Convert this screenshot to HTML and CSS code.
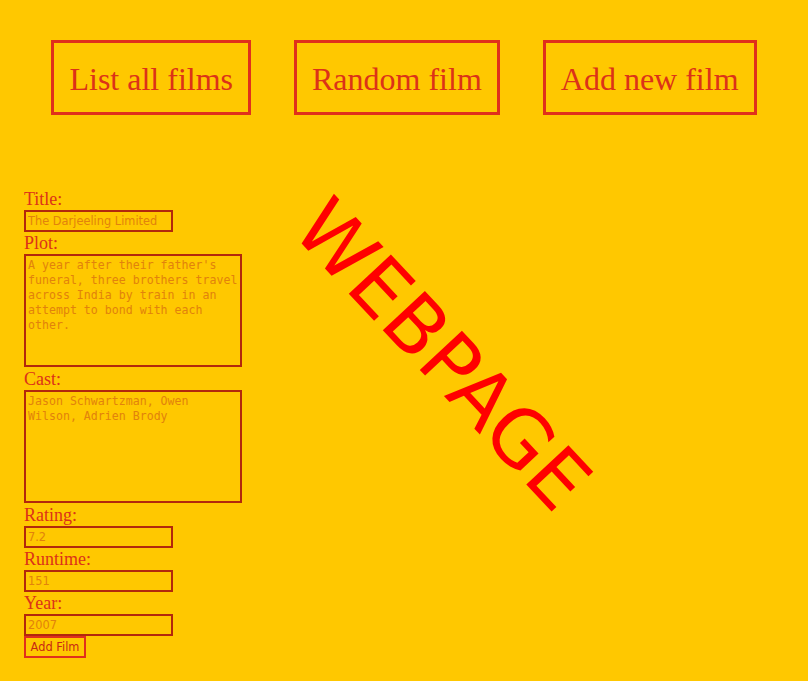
FILE: index.html
```html
<!DOCTYPE html>
<html lang="en">
<head>
  <meta charset="UTF-8" />
  <title>Films</title>
  <link rel="stylesheet" href="styles.css">
</head>
<body>
  <nav class="menu">
    <button class="menu-btn">List all films</button>
    <button class="menu-btn">Random film</button>
    <button class="menu-btn">Add new film</button>
  </nav>

  <form class="film-form">
    <label for="title">Title:</label>
    <input type="text" id="title" value="The Darjeeling Limited" />
    <label for="plot">Plot:</label>
    <textarea id="plot">A year after their father's funeral, three brothers travel across India by train in an attempt to bond with each other.</textarea>
    <label for="cast">Cast:</label>
    <textarea id="cast">Jason Schwartzman, Owen Wilson, Adrien Brody</textarea>
    <label for="rating">Rating:</label>
    <input type="text" id="rating" value="7.2" />
    <label for="runtime">Runtime:</label>
    <input type="text" id="runtime" value="151" />
    <label for="year">Year:</label>
    <input type="text" id="year" value="2007" />
    <button type="button" class="add-btn">Add Film</button>
  </form>

  <div class="stamp">WEBPAGE</div>
</body>
</html>
```

FILE: styles.css
```css
* { box-sizing: border-box; }
body {
  margin: 0;
  background: #ffc800;
  color: #dc3218;
  font-family: 'Liberation Serif', serif;
}
.menu {
  display: flex;
  justify-content: center;
  gap: 43px;
  padding-top: 40px;
}
.menu-btn {
  background: transparent;
  border: 3px solid #e0301c;
  color: #dc3218;
  font-family: 'Liberation Serif', serif;
  font-size: 32px;
  line-height: 37px;
  padding: 18px 15px 14px;
  margin: 0;
}
.film-form {
  display: flex;
  flex-direction: column;
  align-items: flex-start;
  padding: 73px 0 0 24px;
}
.film-form label {
  font-size: 18px;
  line-height: 22px;
}
.film-form input,
.film-form textarea {
  background: transparent;
  border: 2px solid #b2280c;
  color: #e2820c;
  margin: 0;
  outline: none;
}
.film-form input {
  width: 149px;
  height: 22px;
  padding: 0 2px;
  font-family: 'DejaVu Sans', sans-serif;
  font-size: 11.4px;
}
.film-form textarea {
  width: 218px;
  height: 113px;
  padding: 2px;
  margin-bottom: 1px;
  resize: none;
  font-family: 'DejaVu Sans Mono', monospace;
  font-size: 11.6px;
  line-height: 15px;
}
.add-btn {
  background: transparent;
  border: 2px solid #e0301c;
  color: #c82814;
  font-family: 'DejaVu Sans', sans-serif;
  font-size: 11.4px;
  height: 22px;
  width: 62px;
  padding: 0;
}
.stamp {
  position: absolute;
  left: 442px;
  top: 355px;
  transform: translate(-50%, -50%) rotate(47deg);
  color: #ff0000;
  font-family: 'DejaVu Sans', sans-serif;
  font-size: 79px;
  line-height: 1;
  white-space: nowrap;
}
```
